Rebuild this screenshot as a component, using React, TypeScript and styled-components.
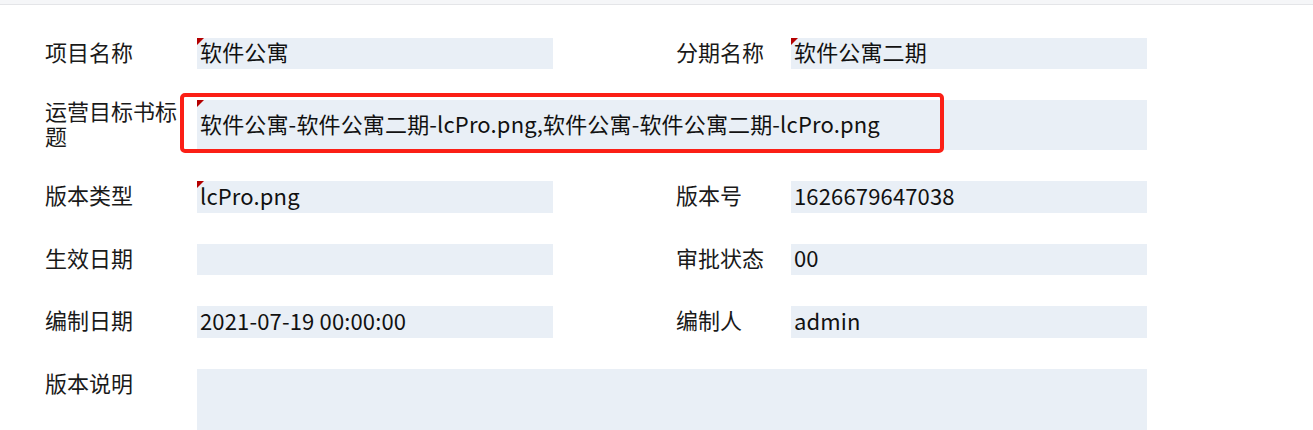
import React from 'react';
import styled, { createGlobalStyle } from 'styled-components';

const GlobalStyle = createGlobalStyle`
  *, *::before, *::after {
    box-sizing: border-box;
  }
  body {
    margin: 0;
    background: #ffffff;
    font-family: "Microsoft YaHei", "Noto Sans CJK SC", "Noto Sans", sans-serif;
    color: #1a1a1a;
  }
`;

const TopBar = styled.div`
  height: 5px;
  background: #f5f6f8;
  border-bottom: 1px solid #e4e5e8;
`;

const FormGrid = styled.div`
  display: grid;
  grid-template-columns: 152px 356px 123px 115px 356px;
  row-gap: 31px;
  padding: 32.7px 0 0 45px;
  font-size: 22px;
`;

const Label = styled.div<{ $right?: boolean }>`
  grid-column: ${(p) => (p.$right ? '4' : '1')};
  display: flex;
  align-items: center;
  align-self: start;
  min-height: 31.5px;
  margin-top: -2px;
  line-height: 25px;
  color: #1a1a1a;
`;

const Field = styled.div<{ $wide?: boolean; $height?: number; $required?: boolean }>`
  position: relative;
  grid-column: ${(p) => (p.$wide ? '2 / 6' : 'auto')};
  height: ${(p) => p.$height ?? 31.5}px;
  display: flex;
  align-items: center;
  padding: 0 0 4px 3px;
  background: #e9eff6;
  color: #111;
  white-space: nowrap;
  letter-spacing: 0.15px;

  ${(p) =>
    p.$required &&
    `
    &::before {
      content: '';
      position: absolute;
      left: 0;
      top: 0;
      border-top: 7px solid #b40000;
      border-right: 7px solid transparent;
    }
  `}
`;

const Highlight = styled.div`
  position: absolute;
  left: -17px;
  top: -7px;
  width: 764px;
  height: 60px;
  border: 4px solid #fb1f16;
  border-radius: 5px;
  pointer-events: none;
`;

export default function App() {
  return (
    <>
      <GlobalStyle />
      <TopBar />
      <FormGrid>
        <Label>项目名称</Label>
        <Field $required>软件公寓</Field>
        <Label $right>分期名称</Label>
        <Field $required>软件公寓二期</Field>

        <Label>运营目标书标题</Label>
        <Field $wide $required $height={50}>
          软件公寓-软件公寓二期-lcPro.png,软件公寓-软件公寓二期-lcPro.png
          <Highlight />
        </Field>

        <Label>版本类型</Label>
        <Field $required>lcPro.png</Field>
        <Label $right>版本号</Label>
        <Field>1626679647038</Field>

        <Label>生效日期</Label>
        <Field />
        <Label $right>审批状态</Label>
        <Field>00</Field>

        <Label>编制日期</Label>
        <Field>2021-07-19 00:00:00</Field>
        <Label $right>编制人</Label>
        <Field>admin</Field>

        <Label>版本说明</Label>
        <Field $wide $height={80} />
      </FormGrid>
    </>
  );
}
